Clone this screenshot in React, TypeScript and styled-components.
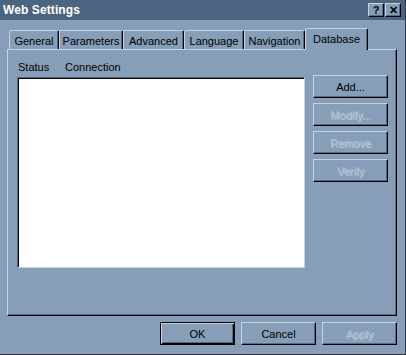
import React from "react";
import styled, { createGlobalStyle, css } from "styled-components";

const BG = "#879eb8";
const LIGHT = "#c6d3e1";
const DARK = "#566a82";
const TITLE = "#4b6480";

const GlobalStyle = createGlobalStyle`
  html, body { margin: 0; padding: 0; background: ${BG}; }
  body { font-family: "Liberation Sans", Arial, sans-serif; font-size: 11px; color: #000; }
  * { box-sizing: border-box; }
`;

const Window = styled.div`
  width: 406px;
  height: 355px;
  background: ${BG};
  display: flex;
  flex-direction: column;
  border-right: 1px solid #2a3644;
  border-bottom: 1px solid #2a3644;
`;

const TitleBar = styled.div`
  height: 20px;
  background: ${TITLE};
  display: flex;
  align-items: center;
  padding: 0 4px 0 3px;
`;

const Title = styled.div`
  flex: 1;
  color: #fff;
  font-weight: bold;
  font-size: 12px;
  letter-spacing: 0.1px;
`;

const CaptionButton = styled.div`
  width: 16px;
  height: 14px;
  background: ${BG};
  border-top: 1px solid ${LIGHT};
  border-left: 1px solid ${LIGHT};
  border-right: 1px solid #000;
  border-bottom: 1px solid #000;
  box-shadow: inset -1px -1px 0 ${DARK};
  display: flex;
  align-items: center;
  justify-content: center;
  font-weight: bold;
  font-size: 11px;
  line-height: 1;
  margin-left: 1px;
`;

const Body = styled.div`
  flex: 1;
  display: flex;
  flex-direction: column;
  padding: 8px 8px 0 7px;
`;

const TabStrip = styled.div`
  display: flex;
  align-items: flex-end;
  height: 21px;
  padding-left: 2px;
  position: relative;
  z-index: 1;
`;

const Tab = styled.div<{ $w: number; $active?: boolean }>`
  width: ${(p) => p.$w}px;
  height: 19px;
  border-top: 1px solid ${LIGHT};
  border-left: 1px solid ${LIGHT};
  border-right: 1px solid #000;
  border-top-left-radius: 2px;
  border-top-right-radius: 2px;
  box-shadow: inset -1px 0 0 ${DARK};
  display: flex;
  align-items: center;
  justify-content: center;
  background: ${BG};
  padding-top: 1px;
  ${(p) =>
    p.$active &&
    css`
      height: 22px;
      margin-bottom: -1px;
      padding-bottom: 2px;
    `}
`;

const Panel = styled.div`
  width: 390px;
  height: 267px;
  border-top: 1px solid ${LIGHT};
  border-left: 1px solid ${LIGHT};
  border-right: 1px solid #000;
  border-bottom: 1px solid #000;
  box-shadow: inset -1px -1px 0 ${DARK};
  display: grid;
  grid-template-columns: 288px 75px;
  column-gap: 8px;
  padding: 10px 0 0 9px;
  align-items: start;
`;

const ListColumn = styled.div`
  display: flex;
  flex-direction: column;
`;

const Header = styled.div`
  height: 17px;
  display: flex;
  align-items: center;
  padding-bottom: 3px;
`;

const HeaderCell = styled.div<{ $w: number }>`
  width: ${(p) => p.$w}px;
  padding-left: 1px;
`;

const ListBox = styled.div`
  height: 191px;
  background: #fff;
  border-top: 1px solid ${DARK};
  border-left: 1px solid ${DARK};
  border-right: 1px solid ${LIGHT};
  border-bottom: 1px solid ${LIGHT};
  box-shadow: inset 1px 1px 0 #000;
`;

const ButtonColumn = styled.div`
  display: flex;
  flex-direction: column;
  gap: 5px;
  margin-top: 15px;
`;

const Button = styled.div<{ $disabled?: boolean; $default?: boolean }>`
  width: 75px;
  height: 23px;
  background: ${BG};
  border-top: 1px solid ${LIGHT};
  border-left: 1px solid ${LIGHT};
  border-right: 1px solid #000;
  border-bottom: 1px solid #000;
  box-shadow: inset -1px -1px 0 ${DARK};
  display: flex;
  align-items: center;
  justify-content: center;
  color: #000;
  ${(p) =>
    p.$disabled &&
    css`
      color: #a9b9ca;
      text-shadow: 1px 1px 0 #bccadb;
    `}
  ${(p) =>
    p.$default &&
    css`
      border: 1px solid #000;
      box-shadow: inset 1px 1px 0 ${LIGHT}, inset -1px -1px 0 #000, inset -2px -2px 0 ${DARK};
    `}
`;

const Footer = styled.div`
  display: flex;
  justify-content: flex-end;
  gap: 6px;
  padding-top: 6px;
`;

const tabs = [
  { label: "General", w: 50 },
  { label: "Parameters", w: 64 },
  { label: "Advanced", w: 61 },
  { label: "Language", w: 60 },
  { label: "Navigation", w: 61 },
  { label: "Database", w: 63, active: true },
];

export default function App() {
  return (
    <>
      <GlobalStyle />
      <Window>
        <TitleBar>
          <Title>Web Settings</Title>
          <CaptionButton>?</CaptionButton>
          <CaptionButton>✕</CaptionButton>
        </TitleBar>
        <Body>
          <TabStrip>
            {tabs.map((t) => (
              <Tab key={t.label} $w={t.w} $active={t.active}>
                {t.label}
              </Tab>
            ))}
          </TabStrip>
          <Panel>
            <ListColumn>
              <Header>
                <HeaderCell $w={47}>Status</HeaderCell>
                <HeaderCell $w={100}>Connection</HeaderCell>
              </Header>
              <ListBox />
            </ListColumn>
            <ButtonColumn>
              <Button>Add...</Button>
              <Button $disabled>Modify...</Button>
              <Button $disabled>Remove</Button>
              <Button $disabled>Verify</Button>
            </ButtonColumn>
          </Panel>
          <Footer>
            <Button $default>OK</Button>
            <Button>Cancel</Button>
            <Button $disabled>Apply</Button>
          </Footer>
        </Body>
      </Window>
    </>
  );
}
